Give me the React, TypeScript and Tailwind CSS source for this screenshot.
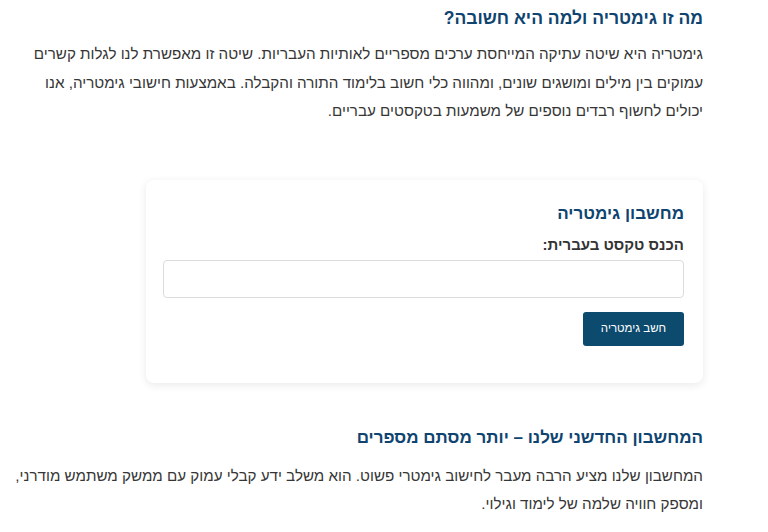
import { useState } from "react";

export default function App() {
  const [text, setText] = useState("");

  return (
    <div
      dir="rtl"
      className="min-h-[532px] bg-white pr-[65px] pl-[10px] pt-[6px]"
      style={{ fontFamily: '"Liberation Sans", Arial, sans-serif' }}
    >
      {/* Intro */}
      <h2 className="text-[17.5px] font-bold leading-[24px] text-[#0f4470]">
        מה זו גימטריה ולמה היא חשובה?
      </h2>
      <p className="mt-[10px] text-[15.2px] leading-[28.5px] text-[#363636]">
        גימטריה היא שיטה עתיקה המייחסת ערכים מספריים לאותיות העבריות. שיטה זו מאפשרת לנו לגלות קשרים
        עמוקים בין מילים ומושגים שונים, ומהווה כלי חשוב בלימוד התורה והקבלה. באמצעות חישובי גימטריה, אנו
        יכולים לחשוף רבדים נוספים של משמעות בטקסטים עבריים.
      </p>

      {/* Calculator card */}
      <div className="mt-[54px] ml-[136px] rounded-[8px] bg-white pr-[19px] pl-[17px] pt-[23px] pb-[37px] shadow-[0_2px_8px_rgba(0,0,0,0.09)]">
        <h3 className="text-[17px] font-bold leading-[22px] text-[#0f4470]">מחשבון גימטריה</h3>
        <label className="mt-[10px] block text-[15px] font-bold leading-[20px] text-[#333]">
          הכנס טקסט בעברית:
        </label>
        <input
          value={text}
          onChange={(e) => setText(e.target.value)}
          className="mt-[5px] block h-[38px] w-full rounded-[4px] border border-[#dcdcdc] bg-white px-3 text-[15px] outline-none"
        />
        <button className="mt-[14px] h-[34px] w-[101px] rounded-[3px] bg-[#0c4a6e] text-[11.5px] text-white">
          חשב גימטריה
        </button>
      </div>

      {/* Second section */}
      <h2 className="mt-[43px] text-[17px] font-bold leading-[24px] text-[#0f4470]">
        המחשבון החדשני שלנו – יותר מסתם מספרים
      </h2>
      <p className="mt-[12px] text-[15.2px] leading-[28.5px] text-[#363636]">
        המחשבון שלנו מציע הרבה מעבר לחישוב גימטרי פשוט. הוא משלב ידע קבלי עמוק עם ממשק משתמש מודרני,
        ומספק חוויה שלמה של לימוד וגילוי.
      </p>
    </div>
  );
}
